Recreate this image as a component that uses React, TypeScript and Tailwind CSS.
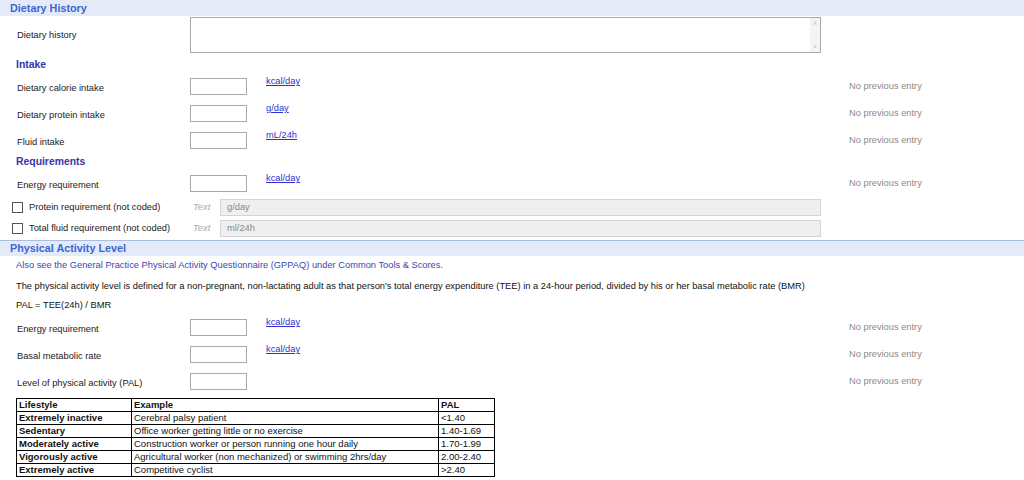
import React from 'react';

const font = { fontFamily: '"Liberation Sans", Arial, sans-serif' };

function SectionHeader({ title, line }: { title: string; line?: boolean }) {
  return (
    <div
      className={`flex h-[16px] items-center bg-[#e4eaf8] pl-[10px] text-[10.8px] font-bold text-[#3b66d0] ${line ? 'border-t border-[#a9bde2]' : ''}`}
    >
      {title}
    </div>
  );
}

function SubHeading({ title }: { title: string }) {
  return <div className="flex h-[16px] items-center pl-[16px] text-[10.4px] font-bold text-[#3636a8]">{title}</div>;
}

function Row({ label, unit, prev = true }: { label: string; unit?: string; prev?: boolean }) {
  return (
    <div className="flex h-[27px] items-center">
      <div className="w-[190px] pl-[17px] pt-[4px] text-[9.3px] text-[#1a1a1a]">{label}</div>
      <div className="h-[17px] w-[57px] border border-[#a9a9a9] bg-white" />
      <div className="ml-[19px] w-[583px] self-start pt-[2px] text-[9.3px]">
        {unit && <span className="text-[#3030d0] underline">{unit}</span>}
      </div>
      {prev && <div className="text-[9.3px] text-[#8a8a8a]">No previous entry</div>}
    </div>
  );
}

function CheckRow({ label, placeholder }: { label: string; placeholder: string }) {
  return (
    <div className="flex h-[21px] items-center">
      <div className="flex w-[190px] items-center pl-[12px] text-[9.3px] text-[#1a1a1a]">
        <span className="mr-[6px] h-[11px] w-[11px] border border-[#555] bg-white" />
        {label}
      </div>
      <div className="w-[30px] pl-[3px] text-[9.3px] italic text-[#aaa]">Text</div>
      <div className="flex h-[17px] w-[601px] items-center border border-[#d4d4d4] bg-[#efefef] pl-[6px] text-[9.3px] text-[#888]">
        {placeholder}
      </div>
    </div>
  );
}

const rows = [
  ['Extremely inactive', 'Cerebral palsy patient', '<1.40'],
  ['Sedentary', 'Office worker getting little or no exercise', '1.40-1.69'],
  ['Moderately active', 'Construction worker or person running one hour daily', '1.70-1.99'],
  ['Vigorously active', 'Agricultural worker (non mechanized) or swimming 2hrs/day', '2.00-2.40'],
  ['Extremely active', 'Competitive cyclist', '>2.40'],
];

export default function App() {
  return (
    <div className="h-[480px] w-[1024px] overflow-hidden bg-white" style={font}>
      <SectionHeader title="Dietary History" />
      <div className="mt-[1px] flex h-[36px] items-center">
        <div className="w-[190px] pl-[17px] pt-[2px] text-[9.3px] text-[#1a1a1a]">Dietary history</div>
        <div className="flex h-[36px] w-[631px] border border-[#a9a9a9] bg-white">
          <div className="flex-1" />
          <div className="flex w-[10px] flex-col items-center justify-between bg-[#f4f4f4] py-[2px] text-[7px] leading-none text-[#bbb]">
            <span>˄</span>
            <span>˅</span>
          </div>
        </div>
      </div>
      <div className="h-[4px]" />
      <SubHeading title="Intake" />
      <Row label="Dietary calorie intake" unit="kcal/day" />
      <Row label="Dietary protein intake" unit="g/day" />
      <Row label="Fluid intake" unit="mL/24h" />
      <SubHeading title="Requirements" />
      <Row label="Energy requirement" unit="kcal/day" />
      <CheckRow label="Protein requirement (not coded)" placeholder="g/day" />
      <CheckRow label="Total fluid requirement (not coded)" placeholder="ml/24h" />
      <div className="h-[1px]" />
      <SectionHeader title="Physical Activity Level" line />
      <div className="flex h-[20px] items-center pl-[16px] text-[9.3px] text-[#3a46b0]">
        Also see the General Practice Physical Activity Questionnaire (GPPAQ) under Common Tools &amp; Scores.
      </div>
      <div className="flex h-[21px] items-center pl-[16px] text-[9.3px] text-[#111]">
        The physical activity level is defined for a non-pregnant, non-lactating adult as that person's total energy
        expenditure (TEE) in a 24-hour period, divided by his or her basal metabolic rate (BMR)
      </div>
      <div className="flex h-[17px] items-center pl-[16px] text-[9.3px] text-[#111]">PAL = TEE(24h) / BMR</div>
      <Row label="Energy requirement" unit="kcal/day" />
      <Row label="Basal metabolic rate" unit="kcal/day" />
      <Row label="Level of physical activity (PAL)" />
      <div className="ml-[16px] mt-[3px]">
        <table className="border-collapse text-[9.5px] leading-[12px] text-[#111]">
          <tbody>
            <tr className="font-bold">
              <td className="w-[115px] border border-black pl-[2px]">Lifestyle</td>
              <td className="w-[307px] border border-black pl-[2px]">Example</td>
              <td className="w-[56px] border border-black pl-[2px]">PAL</td>
            </tr>
            {rows.map((r) => (
              <tr key={r[0]}>
                <td className="border border-black pl-[2px] font-bold">{r[0]}</td>
                <td className="border border-black pl-[2px]">{r[1]}</td>
                <td className="border border-black pl-[2px]">{r[2]}</td>
              </tr>
            ))}
          </tbody>
        </table>
      </div>
    </div>
  );
}
